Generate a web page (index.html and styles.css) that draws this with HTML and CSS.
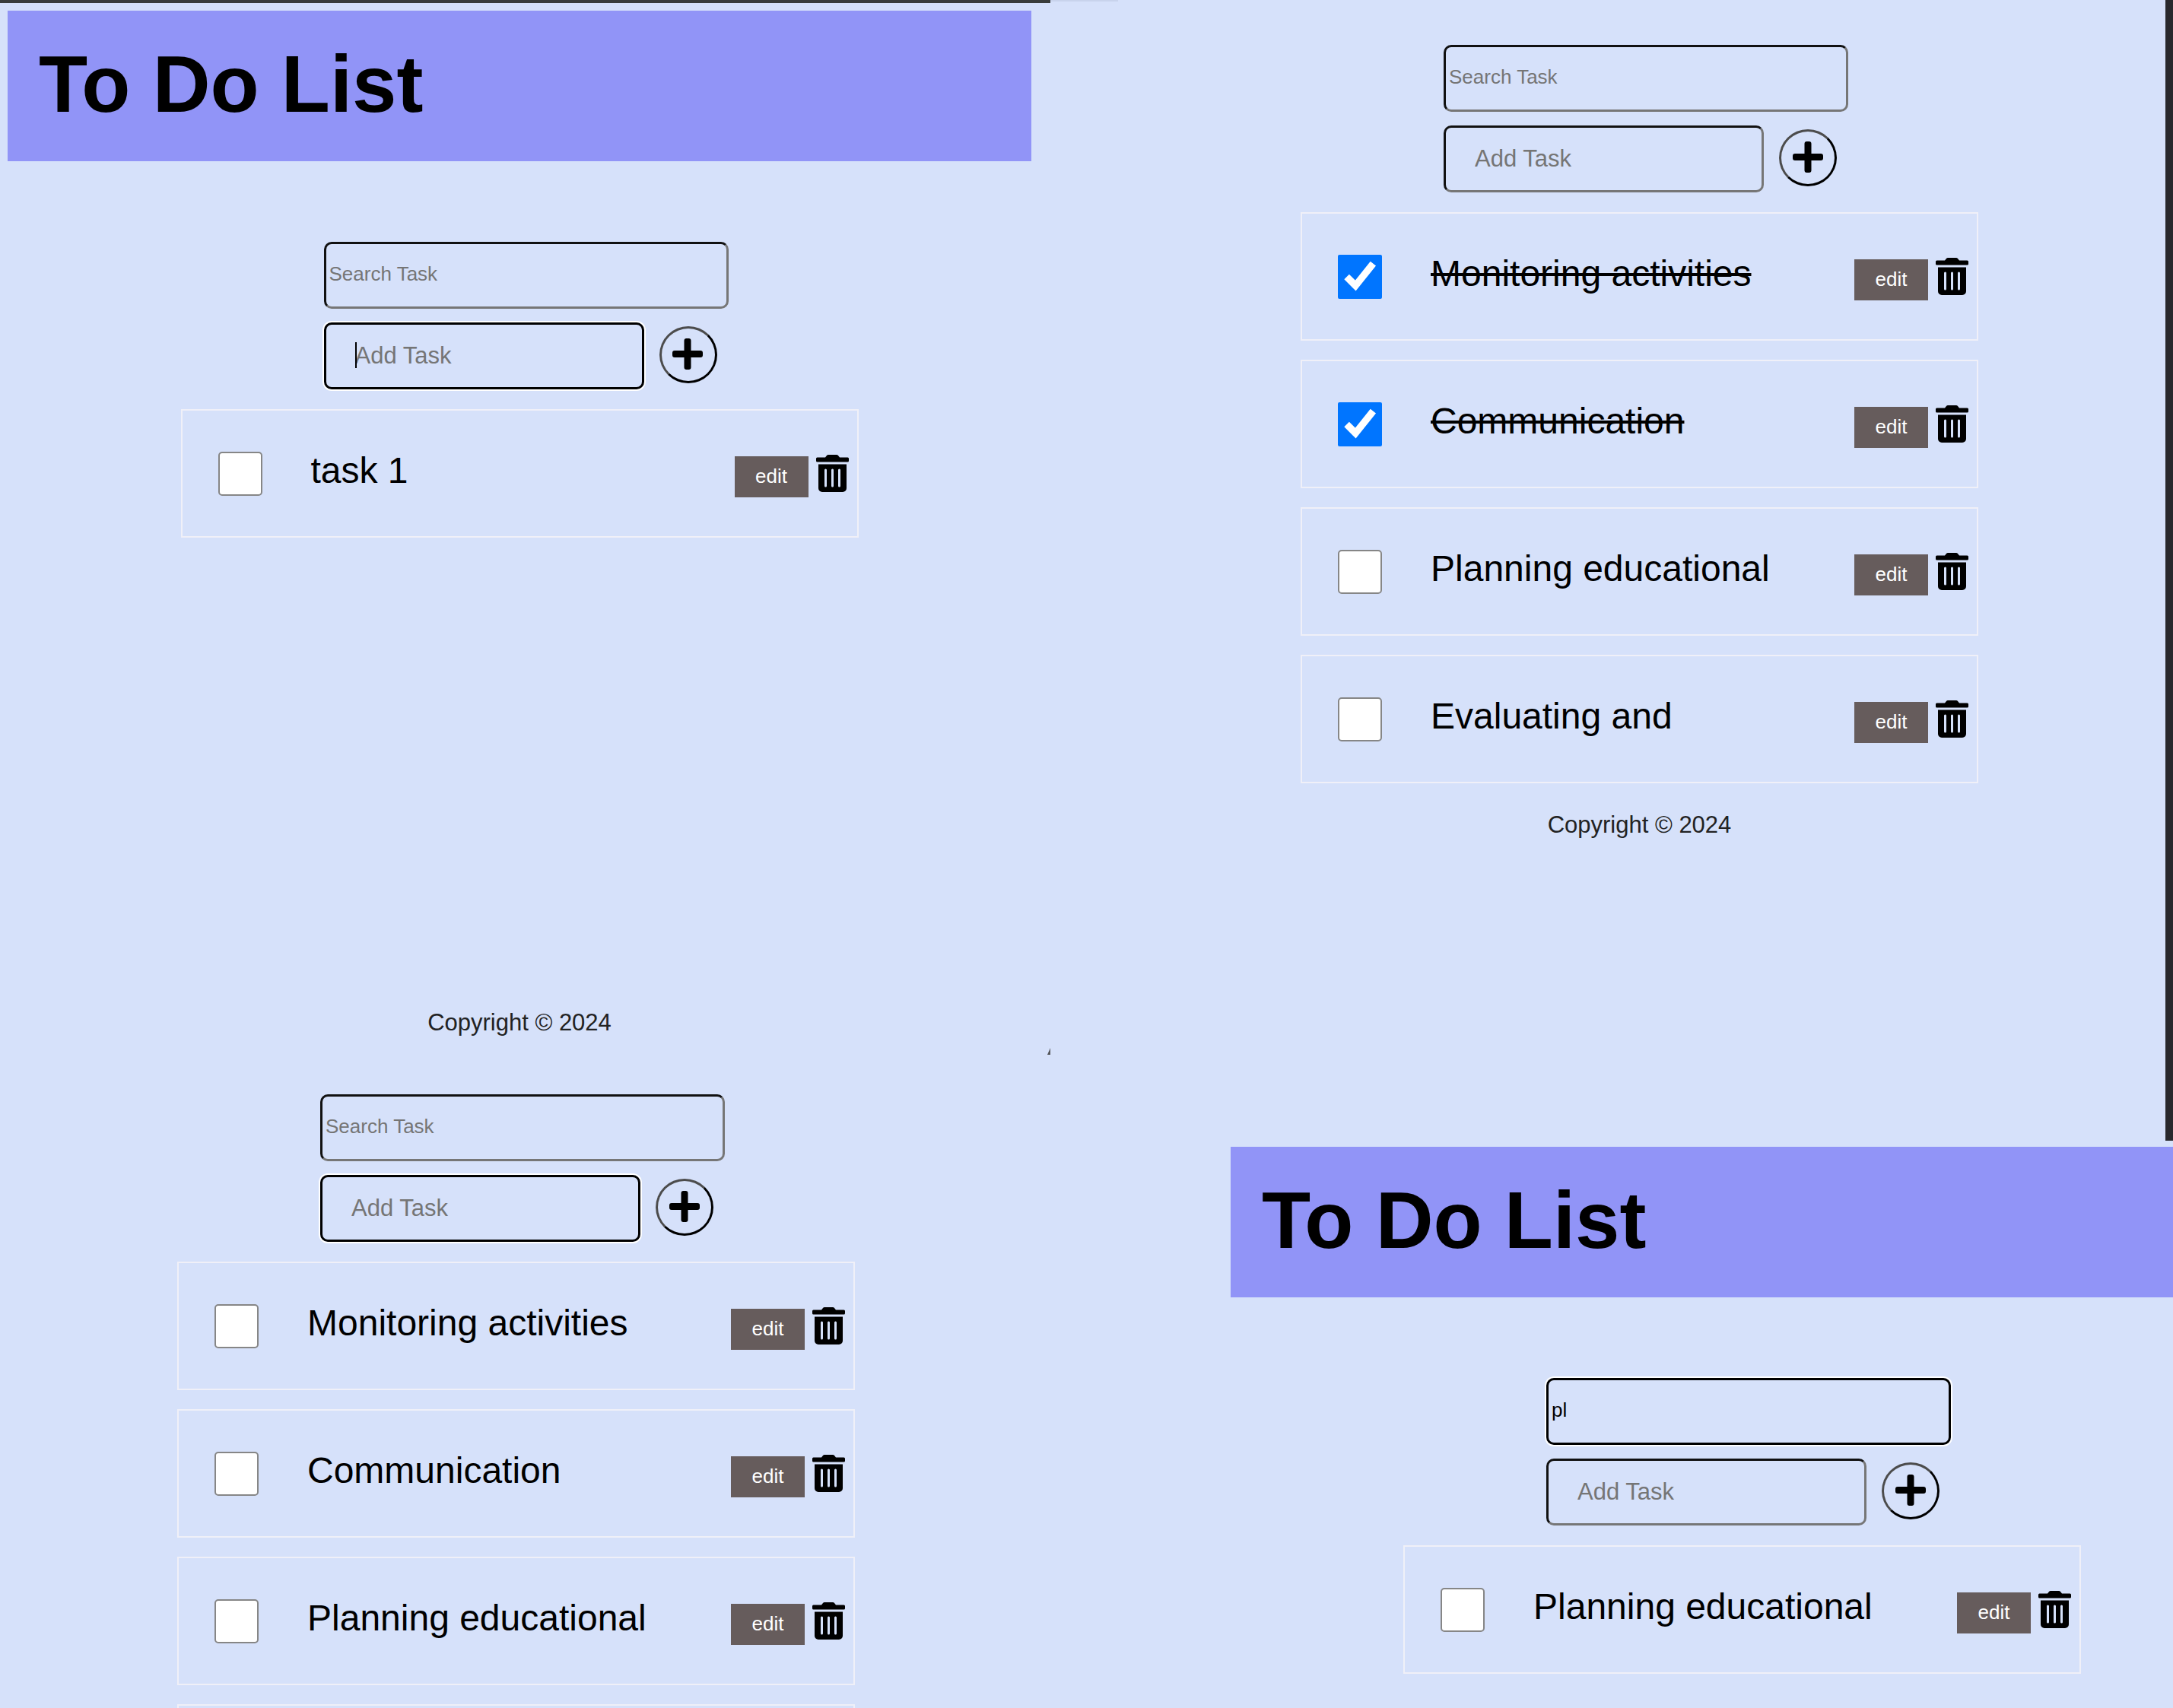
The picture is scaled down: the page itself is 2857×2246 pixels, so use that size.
FILE: index.html
```html
<!DOCTYPE html>
<html lang="en">
<head>
<meta charset="utf-8">
<meta name="viewport" content="width=device-width, initial-scale=1">
<title>To Do List</title>
<link rel="stylesheet" href="styles.css">
</head>
<body>
<svg class="sprite" aria-hidden="true">
  <symbol id="plus" viewBox="0 0 40 41">
    <path d="M18.500 0h3a3 3 0 0 1 3 3v13H37a3 3 0 0 1 3 3v3a3 3 0 0 1-3 3H24.500v13a3 3 0 0 1-3 3h-3a3 3 0 0 1-3-3V25H3a3 3 0 0 1-3-3v-3a3 3 0 0 1 3-3h12.500V3a3 3 0 0 1 3-3z"/>
  </symbol>
  <symbol id="trash" viewBox="0 0 43 49">
    <path d="M1.500 3.500H12L14 1a2.500 2.500 0 0 1 2-1h11a2.500 2.500 0 0 1 2 1l2 2.500h10.500A1.500 1.500 0 0 1 43 5v3a1.500 1.500 0 0 1-1.500 1.500h-40A1.500 1.500 0 0 1 0 8V5a1.500 1.500 0 0 1 1.500-1.500z"/>
    <path fill-rule="evenodd" d="M3 12.500h37V44a5 5 0 0 1-5 5H8a5 5 0 0 1-5-5zM12.500 18.500a1.500 1.500 0 0 0-1.500 1.500v21a1.500 1.500 0 0 0 3 0V20a1.500 1.500 0 0 0-1.500-1.500zM21.500 18.500a1.500 1.500 0 0 0-1.500 1.500v21a1.500 1.500 0 0 0 3 0V20a1.500 1.500 0 0 0-1.500-1.500zM30.500 18.500a1.500 1.500 0 0 0-1.500 1.500v21a1.500 1.500 0 0 0 3 0V20a1.500 1.500 0 0 0-1.500-1.500z"/>
  </symbol>
</svg>

<main class="screens">
  <div class="column">
    <section class="app app-first">
      <header class="banner"><h1>To Do List</h1></header>
      <div class="board">
        <form class="controls">
          <input class="field search" type="text" placeholder="Search Task" aria-label="Search Task">
          <div class="add-row">
            <div class="add-box">
              <input class="field add active" type="text" placeholder="Add Task" aria-label="Add Task">
              <span class="caret"></span>
            </div>
            <button class="plus" type="button" aria-label="Add"><svg width="40" height="41"><use href="#plus"/></svg></button>
          </div>
        </form>
        <ul class="tasks">
          <li class="task"><input type="checkbox" id="a1"><label for="a1">task 1</label><button class="edit" type="button">edit</button><button class="trash" type="button" aria-label="Delete"><svg width="43" height="49"><use href="#trash"/></svg></button></li>
        </ul>
      </div>
      <footer class="copyright">Copyright © 2024</footer>
      <svg class="corner" width="4" height="10" viewBox="0 0 4 10" aria-hidden="true"><path d="M4 1v9H0z"/></svg>
    </section>

    <section class="app app-list">
      <div class="board">
        <form class="controls">
          <input class="field search" type="text" placeholder="Search Task" aria-label="Search Task">
          <div class="add-row">
            <div class="add-box">
              <input class="field add active" type="text" placeholder="Add Task" aria-label="Add Task">
            </div>
            <button class="plus" type="button" aria-label="Add"><svg width="40" height="41"><use href="#plus"/></svg></button>
          </div>
        </form>
        <ul class="tasks">
          <li class="task"><input type="checkbox" id="c1"><label for="c1">Monitoring activities</label><button class="edit" type="button">edit</button><button class="trash" type="button" aria-label="Delete"><svg width="43" height="49"><use href="#trash"/></svg></button></li>
          <li class="task"><input type="checkbox" id="c2"><label for="c2">Communication</label><button class="edit" type="button">edit</button><button class="trash" type="button" aria-label="Delete"><svg width="43" height="49"><use href="#trash"/></svg></button></li>
          <li class="task"><input type="checkbox" id="c3"><label for="c3">Planning educational</label><button class="edit" type="button">edit</button><button class="trash" type="button" aria-label="Delete"><svg width="43" height="49"><use href="#trash"/></svg></button></li>
          <li class="task"></li>
        </ul>
      </div>
    </section>
  </div>

  <div class="column">
    <section class="app app-done">
      <div class="board">
        <form class="controls">
          <input class="field search" type="text" placeholder="Search Task" aria-label="Search Task">
          <div class="add-row">
            <div class="add-box">
              <input class="field add" type="text" placeholder="Add Task" aria-label="Add Task">
            </div>
            <button class="plus" type="button" aria-label="Add"><svg width="40" height="41"><use href="#plus"/></svg></button>
          </div>
        </form>
        <ul class="tasks">
          <li class="task"><input type="checkbox" id="b1" checked><label for="b1">Monitoring activities</label><button class="edit" type="button">edit</button><button class="trash" type="button" aria-label="Delete"><svg width="43" height="49"><use href="#trash"/></svg></button></li>
          <li class="task"><input type="checkbox" id="b2" checked><label for="b2">Communication</label><button class="edit" type="button">edit</button><button class="trash" type="button" aria-label="Delete"><svg width="43" height="49"><use href="#trash"/></svg></button></li>
          <li class="task"><input type="checkbox" id="b3"><label for="b3">Planning educational</label><button class="edit" type="button">edit</button><button class="trash" type="button" aria-label="Delete"><svg width="43" height="49"><use href="#trash"/></svg></button></li>
          <li class="task"><input type="checkbox" id="b4"><label for="b4">Evaluating and</label><button class="edit" type="button">edit</button><button class="trash" type="button" aria-label="Delete"><svg width="43" height="49"><use href="#trash"/></svg></button></li>
        </ul>
      </div>
      <footer class="copyright">Copyright © 2024</footer>
    </section>

    <section class="app app-search">
      <header class="banner"><h1>To Do List</h1></header>
      <div class="board">
        <form class="controls">
          <input class="field search active" type="text" value="pl" aria-label="Search Task">
          <div class="add-row">
            <div class="add-box">
              <input class="field add" type="text" placeholder="Add Task" aria-label="Add Task">
            </div>
            <button class="plus" type="button" aria-label="Add"><svg width="40" height="41"><use href="#plus"/></svg></button>
          </div>
        </form>
        <ul class="tasks">
          <li class="task"><input type="checkbox" id="d1"><label for="d1">Planning educational</label><button class="edit" type="button">edit</button><button class="trash" type="button" aria-label="Delete"><svg width="43" height="49"><use href="#trash"/></svg></button></li>
        </ul>
      </div>
    </section>
  </div>
</main>
</body>
</html>
```
FILE: styles.css
```css
* {
  box-sizing: border-box;
}

body {
  margin: 0;
  background: #d6e1fa;
  color: #000;
  font-family: "Liberation Sans", Arial, sans-serif;
}

button,
input {
  margin: 0;
  font-family: inherit;
}

.sprite {
  display: none;
}

.screens {
  display: grid;
  grid-template-columns: 1381fr 1476fr;
  height: 100vh;
  overflow: hidden;
}

.column {
  min-width: 0;
}

.app {
  display: flex;
  flex-direction: column;
}

/* Screen variants */
.app-first {
  position: relative;
  min-height: 1387px;
  padding: 10px 25px 24px 10px;
  border-top: 4px solid #3a3d3c;
}

.app-first .copyright {
  margin-top: auto;
}

.app-list {
  padding: 52px 24px 0 0;
}

.app-done {
  position: relative;
  min-height: 1500px;
  padding: 59px 0 0 83px;
  border-right: 10px solid #28282c;
}

.app-done::before {
  content: "";
  position: absolute;
  top: 0;
  left: 0;
  width: 89px;
  height: 2px;
  background: #c8d3ec;
}

.app-done .copyright {
  margin-top: 37px;
}

.app-search {
  padding: 8px 0 0 237px;
}

.app-search .board {
  margin-left: 227px;
}

.corner {
  position: absolute;
  right: 0;
  bottom: 0;
  fill: #55565a;
}

/* Header */
.banner {
  margin-bottom: 106px;
  padding: 36px 41px 40px;
  background: #9194f7;
}

h1 {
  margin: 0;
  font-size: 105px;
  line-height: 122px;
}

/* Form */
.board {
  width: 100%;
  max-width: 891px;
  margin: 0 auto;
}

.controls {
  display: flex;
  flex-direction: column;
  gap: 18px;
  margin: 0 0 26px 188px;
}

.field {
  display: block;
  height: 88px;
  border: 3px solid;
  border-color: #111 #767676 #767676 #111;
  border-radius: 10px;
  background: transparent;
  color: #000;
  outline: 0;
}

.field::placeholder {
  color: #757575;
  opacity: 1;
}

.field.active {
  border-color: #000;
  box-shadow: 0 0 0 2px #fff;
}

.search {
  width: 532px;
  padding: 0 4px 4px;
  font-size: 26px;
}

.add-row {
  display: flex;
  align-items: center;
  gap: 20px;
}

.add-box {
  position: relative;
}

.add {
  width: 421px;
  padding: 0 38px;
  font-size: 31px;
}

.caret {
  position: absolute;
  top: 26px;
  left: 41px;
  width: 2px;
  height: 34px;
  background: #000;
}

.plus {
  display: grid;
  place-items: center;
  width: 76px;
  height: 75px;
  margin-bottom: 4px;
  padding: 0 1px 2px 0;
  border: 3px solid;
  border-color: #4c4c4c #000 #000 #4c4c4c;
  border-radius: 50%;
  background: transparent;
}

/* Task list */
.tasks {
  display: grid;
  gap: 25px;
  margin: 0;
  padding: 0;
  list-style: none;
}

.task {
  display: flex;
  align-items: center;
  height: 169px;
  padding: 0 11px 0 47px;
  border: 2px solid #f0f0f8;
}

.task input {
  flex: none;
  width: 58px;
  height: 58px;
}

.task input:not(:checked) {
  appearance: none;
  border: 2px solid #868686;
  border-radius: 5px;
  background: #fff;
}

.task label {
  flex: 1;
  padding: 0 0 8px 64px;
  font-size: 48px;
  line-height: 56px;
}

.task input:checked + label {
  text-decoration: line-through;
}

.edit {
  width: 97px;
  height: 54px;
  margin: 8px 10px 0 0;
  padding: 0;
  border: 0;
  background: #665c5c;
  color: #fff;
  font-size: 26px;
}

.trash {
  display: flex;
  padding: 0;
  border: 0;
  background: transparent;
}

.copyright {
  color: #222;
  font-size: 31px;
  line-height: 36px;
  text-align: center;
}
```
